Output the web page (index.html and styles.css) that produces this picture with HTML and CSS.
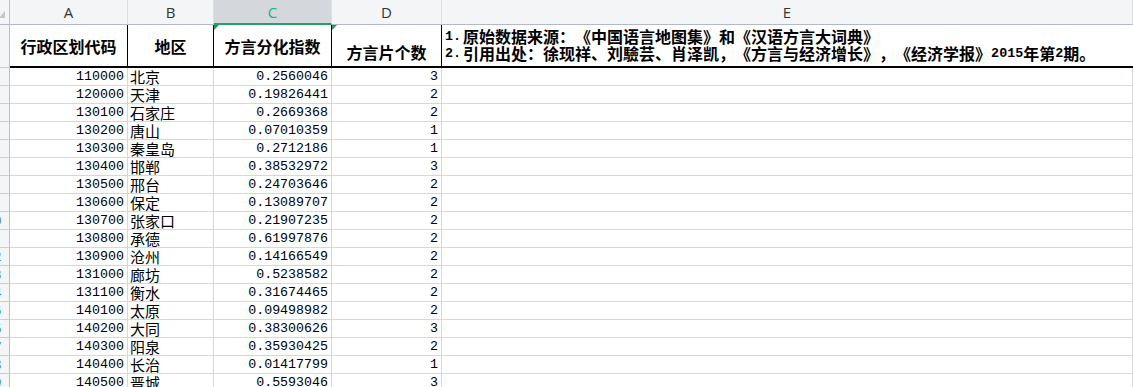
FILE: index.html
```html
<!DOCTYPE html>
<html lang="zh-CN">
<head>
<meta charset="utf-8">
<title>方言分化指数</title>
<link rel="stylesheet" href="styles.css">
</head>
<body>
<div class="sheet">
  <div class="row colhead">
    <div class="corner"><span class="tri"></span></div>
    <div class="ch">A</div>
    <div class="ch">B</div>
    <div class="ch sel">C</div>
    <div class="ch">D</div>
    <div class="ch">E</div>
  </div>
  <div class="row titles">
    <div class="rh"><span>1</span></div>
    <div class="th mid">行政区划代码</div>
    <div class="th mid">地区</div>
    <div class="th mid flag">方言分化指数</div>
    <div class="th bot flag">方言片个数</div>
    <div class="th note">
      <div class="line"><span class="lat idx">1.</span>原始数据来源：《中国语言地图集》和《汉语方言大词典》</div>
      <div class="line"><span class="lat idx">2.</span>引用出处：徐现祥、刘驗芸、肖泽凯，《方言与经济增长》，《经济学报》<span class="lat">2015</span>年第<span class="lat">2</span>期。</div>
    </div>
  </div>
  <div class="row data"><div class="rh"><span>2</span></div><div class="num">110000</div><div class="cn">北京</div><div class="num">0.2560046</div><div class="num">3</div><div></div></div>
  <div class="row data"><div class="rh"><span>3</span></div><div class="num">120000</div><div class="cn">天津</div><div class="num">0.19826441</div><div class="num">2</div><div></div></div>
  <div class="row data"><div class="rh"><span>4</span></div><div class="num">130100</div><div class="cn">石家庄</div><div class="num">0.2669368</div><div class="num">2</div><div></div></div>
  <div class="row data"><div class="rh"><span>5</span></div><div class="num">130200</div><div class="cn">唐山</div><div class="num">0.07010359</div><div class="num">1</div><div></div></div>
  <div class="row data"><div class="rh"><span>6</span></div><div class="num">130300</div><div class="cn">秦皇岛</div><div class="num">0.2712186</div><div class="num">1</div><div></div></div>
  <div class="row data"><div class="rh"><span>7</span></div><div class="num">130400</div><div class="cn">邯郸</div><div class="num">0.38532972</div><div class="num">3</div><div></div></div>
  <div class="row data"><div class="rh"><span>8</span></div><div class="num">130500</div><div class="cn">邢台</div><div class="num">0.24703646</div><div class="num">2</div><div></div></div>
  <div class="row data"><div class="rh"><span>9</span></div><div class="num">130600</div><div class="cn">保定</div><div class="num">0.13089707</div><div class="num">2</div><div></div></div>
  <div class="row data"><div class="rh"><span>10</span></div><div class="num">130700</div><div class="cn">张家口</div><div class="num">0.21907235</div><div class="num">2</div><div></div></div>
  <div class="row data"><div class="rh"><span>11</span></div><div class="num">130800</div><div class="cn">承德</div><div class="num">0.61997876</div><div class="num">2</div><div></div></div>
  <div class="row data"><div class="rh"><span>12</span></div><div class="num">130900</div><div class="cn">沧州</div><div class="num">0.14166549</div><div class="num">2</div><div></div></div>
  <div class="row data"><div class="rh"><span>13</span></div><div class="num">131000</div><div class="cn">廊坊</div><div class="num">0.5238582</div><div class="num">2</div><div></div></div>
  <div class="row data"><div class="rh"><span>14</span></div><div class="num">131100</div><div class="cn">衡水</div><div class="num">0.31674465</div><div class="num">2</div><div></div></div>
  <div class="row data"><div class="rh"><span>15</span></div><div class="num">140100</div><div class="cn">太原</div><div class="num">0.09498982</div><div class="num">2</div><div></div></div>
  <div class="row data"><div class="rh"><span>16</span></div><div class="num">140200</div><div class="cn">大同</div><div class="num">0.38300626</div><div class="num">3</div><div></div></div>
  <div class="row data"><div class="rh"><span>17</span></div><div class="num">140300</div><div class="cn">阳泉</div><div class="num">0.35930425</div><div class="num">2</div><div></div></div>
  <div class="row data"><div class="rh"><span>18</span></div><div class="num">140400</div><div class="cn">长治</div><div class="num">0.01417799</div><div class="num">1</div><div></div></div>
  <div class="row data"><div class="rh"><span>19</span></div><div class="num">140500</div><div class="cn">晋城</div><div class="num">0.5593046</div><div class="num">3</div><div></div></div>
</div>
</body>
</html>
```

FILE: styles.css
```css
* { box-sizing: border-box; margin: 0; padding: 0; }
html, body { width: 1133px; height: 387px; overflow: hidden; background: #ffffff; }
body {
  font-family: "Noto Sans CJK SC", "Noto Sans", sans-serif; color: #000;
  text-spacing-trim: space-all;
}

.sheet { display: flex; flex-direction: column; width: 1133px; }

.row {
  display: grid;
  grid-template-columns: 10px 118px 86px 118px 110px 1fr;
}
.row > div { border-right: 1px solid #d5d8df; border-bottom: 1px solid #d5d8df; overflow: hidden; white-space: nowrap; }

/* column header */
.colhead { height: 25px; background: #f4f5f7; }
.colhead > div { border-bottom: 1px solid #b4bac5; border-right: 1px solid #dcdfe4; }
.corner { position: relative; border-right: 1px solid #b9bec8 !important; }
.tri {
  position: absolute; left: 0; top: 11px;
  width: 0; height: 0;
  border-left: 6px solid transparent;
  border-bottom: 7px solid #c3c6cc;
  transform: translateX(-1px);
}
.ch {
  display: flex; align-items: center; justify-content: center;
  font-family: "Open Sans", "Noto Sans", sans-serif;
  font-size: 15px; color: #333;
}
.ch.sel {
  background: #d4d7dc;
  color: #22b07d;
  border-bottom: 2px solid #21a466 !important;
}

/* row header */
.rh {
  background: #f4f5f7;
  border-right: 1px solid #b9bec8 !important;
  border-bottom-color: #c9cdd5 !important;
  display: flex; align-items: center;
}
.rh span {
  display: block; flex: none;
  width: 30px; margin-left: -21px;
  text-align: center;
  font-family: "Open Sans", sans-serif; font-size: 13px;
  color: #3f86d6;
}

/* title row */
.titles { height: 43px; }
.titles > .th {
  border-bottom: 2px solid #000;
  border-right: 1px solid #000;
  font-weight: 700; font-size: 16px;
  position: relative;
}
.titles > .note { border-right: none; }
.th.mid { display: flex; align-items: center; justify-content: center; }
.th.bot { display: flex; align-items: flex-end; justify-content: center; padding-bottom: 2px; }
.th.note {
  display: flex; flex-direction: column; justify-content: flex-end;
  padding: 0 0 4px 3px; font-size: 16px;
}
.th.note .line { height: 17px; line-height: 17px; display: flex; align-items: center; }
.th.note .lat { font-family: "Liberation Mono", monospace; font-size: 13.4px; font-weight: 700; line-height: 17px; }
.th.note .idx { margin-right: 2px; }
.th.flag::before {
  content: ""; position: absolute; left: 0; top: 0;
  width: 0; height: 0;
  border-top: 5px solid #1f9c5c;
  border-right: 5px solid transparent;
}

/* data rows */
.data { height: 18px; }
.data > div { line-height: 17px; }
.num {
  text-align: right; padding-right: 3px;
  font-family: "Liberation Mono", monospace; font-size: 13.3px;
}
.cn {
  padding-left: 2px;
  font-family: "Noto Sans CJK SC", sans-serif; font-size: 15px; line-height: 17px;
}
```
